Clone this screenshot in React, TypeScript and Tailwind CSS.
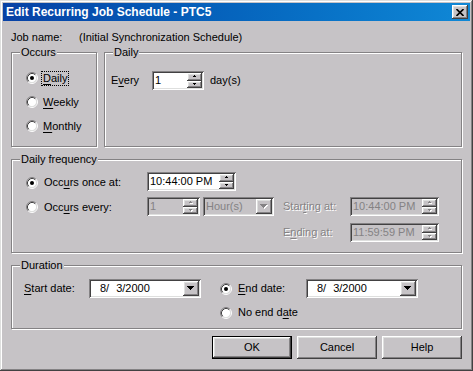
import React from 'react';

const font = "font-['Liberation_Sans',Arial,sans-serif]";
const raised = 'shadow-[inset_-1px_-1px_#424142,inset_1px_1px_#fff,inset_-2px_-2px_#848284,inset_2px_2px_#dedfde]';
const sunken = 'shadow-[inset_1px_1px_#848284,inset_-1px_-1px_#fff,inset_2px_2px_#424142,inset_-2px_-2px_#dedfde]';
const dim = 'text-[#848284] [text-shadow:1px_1px_0_#fff]';

const U = ({ children }: { children: React.ReactNode }) => (
  <span className="underline underline-offset-[2px]">{children}</span>
);

function Radio({ checked }: { checked?: boolean }) {
  return (
    <svg width="12" height="12" viewBox="0 0 12 12" className="block shrink-0">
      <circle cx="6" cy="6" r="4.5" fill="#fff" />
      <path d="M2.11 9.89A5.5 5.5 0 0 1 9.89 2.11" fill="none" stroke="#848284" />
      <path d="M9.89 2.11A5.5 5.5 0 0 1 2.11 9.89" fill="none" stroke="#fff" />
      <path d="M2.82 9.18A4.5 4.5 0 0 1 9.18 2.82" fill="none" stroke="#424142" />
      <path d="M9.18 2.82A4.5 4.5 0 0 1 2.82 9.18" fill="none" stroke="#dedfde" />
      {checked && <circle cx="6" cy="6" r="2" fill="#000" />}
    </svg>
  );
}

function Arrow({ up, w, h, disabled }: { up?: boolean; w: number; h: number; disabled?: boolean }) {
  const pts = up ? `0,${h} ${w / 2},0 ${w},${h}` : `0,0 ${w},0 ${w / 2},${h}`;
  return (
    <svg width={w + 1} height={h + 1} className="block overflow-visible" shapeRendering="crispEdges">
      {disabled && <polygon points={pts} transform="translate(1,1)" fill="#fff" />}
      <polygon points={pts} fill={disabled ? '#848284' : '#000'} />
    </svg>
  );
}

function Spin({ disabled }: { disabled?: boolean }) {
  return (
    <div className="flex w-[15px] flex-col">
      <div className={`flex h-[7.5px] items-center justify-center bg-[#c6c3c6] ${raised}`}>
        <Arrow up w={4} h={2} disabled={disabled} />
      </div>
      <div className={`flex h-[7.5px] items-center justify-center bg-[#c6c3c6] ${raised}`}>
        <Arrow w={4} h={2} disabled={disabled} />
      </div>
    </div>
  );
}

function SpinEdit({ value, className, disabled }: { value: string; className: string; disabled?: boolean }) {
  return (
    <div className={`flex h-[19px] p-[2px] ${sunken} ${disabled ? 'bg-[#c6c3c6]' : 'bg-white'} ${className}`}>
      <div className={`flex-1 pl-[1px] leading-[15px] ${disabled ? 'text-[#848284]' : ''}`}>{value}</div>
      <Spin disabled={disabled} />
    </div>
  );
}

function Combo({ children, className, disabled }: { children: React.ReactNode; className: string; disabled?: boolean }) {
  return (
    <div className={`flex h-[19px] p-[2px] ${sunken} ${disabled ? 'bg-[#c6c3c6]' : 'bg-white'} ${className}`}>
      <div className={`flex-1 leading-[15px] ${disabled ? 'pl-[1px] text-[#848284]' : 'pl-[9px]'}`}>{children}</div>
      <div className={`flex w-[16px] items-center justify-center bg-[#c6c3c6] ${raised}`}>
        <Arrow w={7} h={4} disabled={disabled} />
      </div>
    </div>
  );
}

function Group({ title, className, children }: { title: string; className: string; children?: React.ReactNode }) {
  return (
    <div className={`relative border border-[#848284] shadow-[inset_1px_1px_#fff,1px_1px_#fff] ${className}`}>
      <span className="absolute -top-[7px] left-[8px] bg-[#c6c3c6] px-[1px] leading-[13px]">{title}</span>
      {children}
    </div>
  );
}

function Button({ label, isDefault }: { label: string; isDefault?: boolean }) {
  return (
    <div className={`h-[23px] w-[80px] ${isDefault ? 'border border-black' : ''}`}>
      <div className={`flex h-full items-center justify-center ${raised}`}>{label}</div>
    </div>
  );
}

const DateText = () => (
  <span className="flex">
    8/<span className="ml-[7px]">3/2000</span>
  </span>
);

export default function App() {
  return (
    <div
      className={`flex h-[371px] w-[473px] flex-col bg-[#c6c3c6] text-[11px] leading-[13px] text-black ${font} shadow-[inset_-1px_-1px_#424142,inset_1px_1px_#dedfde,inset_-2px_-2px_#848284,inset_2px_2px_#fff]`}
    >
      {/* title bar */}
      <div className="mx-[3px] mt-[3px] flex h-[18px] items-center bg-gradient-to-r from-[#0841a5] to-[#1088d6] pl-[3px] pr-[2px]">
        <span className="flex-1 text-[12px] font-bold leading-[18px] text-white">Edit Recurring Job Schedule - PTC5</span>
        <div className={`flex h-[14px] w-[16px] items-center justify-center bg-[#c6c3c6] ${raised}`}>
          <svg width="8" height="7" viewBox="0 0 8 7">
            <path d="M0.5 0L7.5 7M7.5 0L0.5 7" stroke="#000" strokeWidth="1.6" />
          </svg>
        </div>
      </div>

      <div className="flex flex-col px-[11px]">
        <div className="mt-[10px] flex">
          <span className="w-[68px]">Job name:</span>
          <span>(Initial Synchronization Schedule)</span>
        </div>

        <div className="mt-[8px] flex gap-[7px]">
          <Group title="Occurs" className="h-[95px] w-[86px]">
            <div className="flex flex-col gap-[8px] pl-[14px] pt-[17px]">
              <div className="flex h-[16px] items-center gap-[3px]">
                <Radio checked />
                <span className="border border-dotted border-black px-[1px] leading-[13px]">
                  <U>D</U>aily
                </span>
              </div>
              <div className="flex h-[16px] items-center gap-[3px]">
                <Radio />
                <span className="px-[2px]">
                  <U>W</U>eekly
                </span>
              </div>
              <div className="flex h-[16px] items-center gap-[3px]">
                <Radio />
                <span className="px-[2px]">
                  <U>M</U>onthly
                </span>
              </div>
            </div>
          </Group>
          <Group title="Daily" className="h-[95px] flex-1">
            <div className="flex items-center pl-[6px] pt-[18px]">
              <span className="w-[41px]">
                E<U>v</U>ery
              </span>
              <SpinEdit value="1" className="w-[52px]" />
              <span className="ml-[6px]">day(s)</span>
            </div>
          </Group>
        </div>

        <Group title="Daily frequency" className="mt-[12px] h-[94px]">
          <div className="flex flex-col pl-[14px] pt-[12px]">
            <div className="flex h-[19px] items-center">
              <div className="flex items-center gap-[6px] pt-[2px]">
                <Radio checked />
                <span className="w-[103px]">
                  Occ<U>u</U>rs once at:
                </span>
              </div>
              <SpinEdit value="10:44:00 PM" className="w-[89px]" />
            </div>
            <div className="mt-[6px] flex items-start">
              <div className="flex h-[19px] items-center">
                <div className="flex items-center gap-[6px] pt-[1px]">
                  <Radio />
                  <span className="w-[103px]">
                    Occ<U>u</U>rs every:
                  </span>
                </div>
                <SpinEdit value="1" className="w-[53px]" disabled />
                <Combo className="ml-[3px] w-[71px]" disabled>
                  Hour(s)
                </Combo>
              </div>
              <div className="ml-[9px] flex flex-col gap-[7px]">
                <div className="flex h-[19px] items-center">
                  <span className={`w-[67px] ${dim}`}>
                    Star<U>t</U>ing at:
                  </span>
                  <SpinEdit value="10:44:00 PM" className="w-[89px]" disabled />
                </div>
                <div className="flex h-[19px] items-center">
                  <span className={`w-[67px] ${dim}`}>
                    E<U>n</U>ding at:
                  </span>
                  <SpinEdit value="11:59:59 PM" className="w-[89px]" disabled />
                </div>
              </div>
            </div>
          </div>
        </Group>

        <Group title="Duration" className="mt-[12px] h-[64px]">
          <div className="flex items-start pl-[12px] pt-[13px]">
            <div className="flex h-[19px] items-center">
              <span className="w-[65px]">
                <U>S</U>tart date:
              </span>
              <Combo className="w-[112px]">
                <DateText />
              </Combo>
            </div>
            <div className="ml-[19px] flex flex-col">
              <div className="flex h-[19px] items-center">
                <div className="flex items-center gap-[6px]">
                  <Radio checked />
                  <span className="w-[68px]">
                    <U>E</U>nd date:
                  </span>
                </div>
                <Combo className="w-[112px]">
                  <DateText />
                </Combo>
              </div>
              <div className="mt-[8px] flex h-[13px] items-center gap-[6px]">
                <Radio />
                <span>
                  No end d<U>a</U>te
                </span>
              </div>
            </div>
          </div>
        </Group>

        <div className="mt-[7px] flex justify-end gap-[5px]">
          <Button label="OK" isDefault />
          <Button label="Cancel" />
          <Button label="Help" />
        </div>
      </div>
    </div>
  );
}
